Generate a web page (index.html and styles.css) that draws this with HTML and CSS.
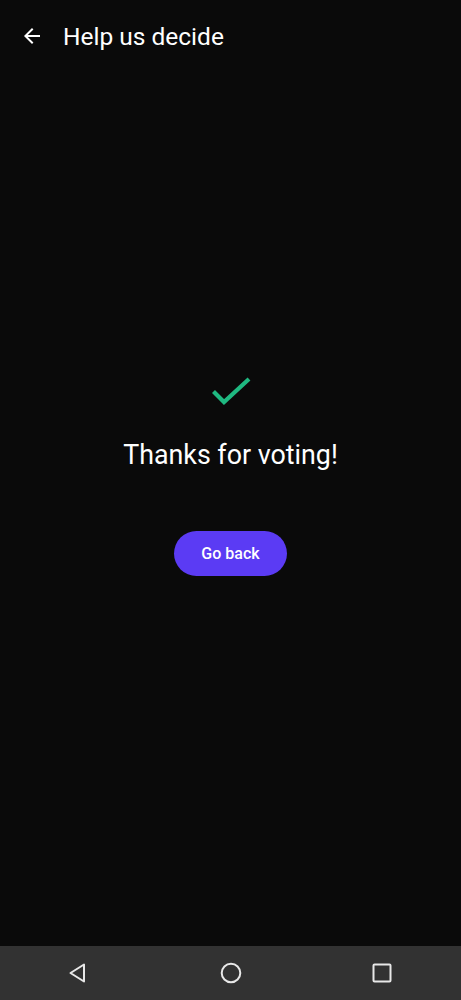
FILE: index.html
```html
<!DOCTYPE html>
<html>
<head>
<meta charset="utf-8">
<link rel="stylesheet" href="styles.css">
</head>
<body>
<div class="screen">
  <header class="topbar">
    <svg class="back" width="24" height="24" viewBox="0 0 24 24"><path d="M20 11H7.83l5.59-5.59L12 4l-8 8 8 8 1.41-1.41L7.83 13H20v-2z" fill="#fff"/></svg>
    <h1 class="title">Help us decide</h1>
  </header>
  <main class="content">
    <svg class="check" width="40" height="30" viewBox="0 0 40 30"><path d="M2.5 14.5 L13 25 L38 2" fill="none" stroke="#1fb981" stroke-width="4.2"/></svg>
    <p class="thanks">Thanks for voting!</p>
    <button class="btn">Go back</button>
  </main>
  <nav class="navbar">
    <svg width="24" height="24" viewBox="0 0 24 24"><path d="M17 3.5 V20.5 L3.5 12 Z" fill="none" stroke="#e8e8e8" stroke-width="2" stroke-linejoin="round"/></svg>
    <svg width="24" height="24" viewBox="0 0 24 24"><circle cx="12" cy="12" r="9.3" fill="none" stroke="#e8e8e8" stroke-width="2"/></svg>
    <svg width="24" height="24" viewBox="0 0 24 24"><rect x="3.5" y="3.5" width="17" height="17" rx="1" fill="none" stroke="#e8e8e8" stroke-width="2"/></svg>
  </nav>
</div>
</body>
</html>
```
FILE: styles.css
```css
html, body {
  margin: 0;
  padding: 0;
  background: #0a0a0a;
}
.screen {
  width: 461px;
  height: 1000px;
  display: flex;
  flex-direction: column;
  font-family: Roboto, "Noto Sans", sans-serif;
  color: #fff;
}
.topbar {
  height: 72px;
  display: flex;
  align-items: center;
  padding-left: 20px;
  box-sizing: border-box;
}
.back {
  display: block;
}
.title {
  margin: 2px 0 0 19px;
  font-size: 24.5px;
  font-weight: 400;
  line-height: 28px;
}
.content {
  flex: 1;
  display: flex;
  flex-direction: column;
  align-items: center;
  padding-top: 305px;
}
.check {
  display: block;
}
.thanks {
  margin: 31px 0 0;
  font-size: 26.8px;
  line-height: 34px;
}
.btn {
  margin-top: 59px;
  width: 113px;
  height: 45px;
  border: none;
  border-radius: 23px;
  background: #5b3bf4;
  color: #fff;
  font-family: Roboto, sans-serif;
  font-weight: 500;
  font-size: 16px;
}
.navbar {
  height: 54px;
  background: #323232;
  display: flex;
  justify-content: space-between;
  align-items: center;
  padding: 0 67px;
}
.navbar svg {
  display: block;
}
```
